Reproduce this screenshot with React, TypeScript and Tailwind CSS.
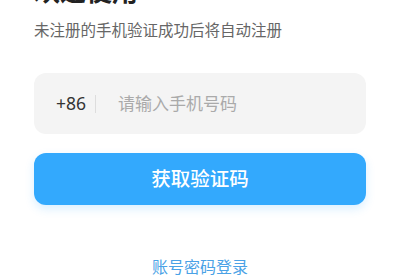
// Phone login panel — welcome title, phone input and verification button.
export default function App() {
  return (
    <div
      className="w-[400px] h-[280px] overflow-hidden bg-white px-[34px]"
      style={{ fontFamily: '"Noto Sans", "Noto Sans CJK SC", sans-serif' }}
    >
      {/* Title, scrolled partly out of view */}
      <h1 className="mt-[-24px] text-[26px] leading-[30px] font-bold text-[#222222]">欢迎使用</h1>

      <p className="mt-[14px] text-[15.5px] leading-[20px] text-[#666666]">未注册的手机验证成功后将自动注册</p>

      {/* Phone input */}
      <div className="mt-[33px] h-[61px] rounded-[12px] bg-[#f4f4f4] flex items-center pl-[22px]">
        <span className="text-[17.5px] text-[#333333]">+86</span>
        <span className="ml-[9px] w-px h-[18px] bg-[#dddddd]" />
        <span className="ml-[22px] text-[17px] text-[#aaaaaa]">请输入手机号码</span>
      </div>

      {/* Primary action */}
      <button className="mt-[19px] w-full h-[52px] rounded-[12px] bg-[#33a9fd] text-white text-[19.5px] font-medium shadow-[0_4px_10px_rgba(51,169,253,0.18)]">
        获取验证码
      </button>

      <div className="mt-[50px] text-center text-[16px] text-[#4aa2e6]">账号密码登录</div>
    </div>
  );
}
